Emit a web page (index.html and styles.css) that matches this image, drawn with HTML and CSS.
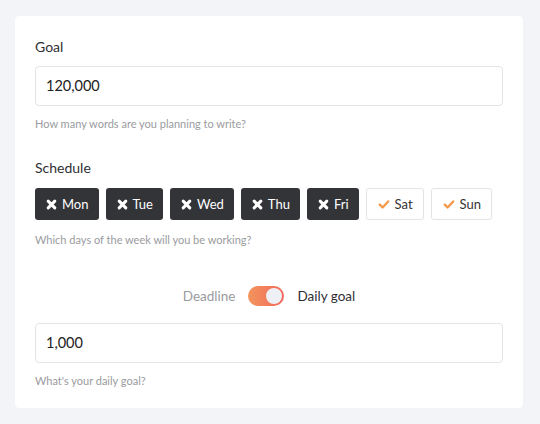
FILE: index.html
```html
<!DOCTYPE html>
<html lang="en">

<head>
    <meta charset="UTF-8">
    <title>Writing goal</title>
    <link rel="stylesheet" href="styles.css">
</head>

<body>
    <div class="card">
        <div class="field">
            <label class="label">Goal</label>
            <div class="input">120,000</div>
            <div class="hint">How many words are you planning to write?</div>
        </div>

        <div class="field sched">
            <label class="label">Schedule</label>
            <div class="days">
                <span class="day off"><svg class="ico" viewBox="0 0 10 10"><path d="M2 2L8 8M8 2L2 8"/></svg>Mon</span>
                <span class="day off"><svg class="ico" viewBox="0 0 10 10"><path d="M2 2L8 8M8 2L2 8"/></svg>Tue</span>
                <span class="day off"><svg class="ico" viewBox="0 0 10 10"><path d="M2 2L8 8M8 2L2 8"/></svg>Wed</span>
                <span class="day off"><svg class="ico" viewBox="0 0 10 10"><path d="M2 2L8 8M8 2L2 8"/></svg>Thu</span>
                <span class="day off"><svg class="ico" viewBox="0 0 10 10"><path d="M2 2L8 8M8 2L2 8"/></svg>Fri</span>
                <span class="day on"><svg class="ico" viewBox="0 0 12 10"><path d="M1.8 5.2L4.6 8L10.2 2"/></svg>Sat</span>
                <span class="day on"><svg class="ico" viewBox="0 0 12 10"><path d="M1.8 5.2L4.6 8L10.2 2"/></svg>Sun</span>
            </div>
            <div class="hint">Which days of the week will you be working?</div>
        </div>

        <div class="switch-row">
            <span class="opt">Deadline</span>
            <span class="toggle"><span class="knob"></span></span>
            <span class="opt active">Daily goal</span>
        </div>

        <div class="field last">
            <div class="input">1,000</div>
            <div class="hint">What's your daily goal?</div>
        </div>
    </div>
</body>

</html>
```

FILE: styles.css
```css
body {
    margin: 0;
    background: #f3f4f8;
    font-family: Lato, "Open Sans", sans-serif;
    color: #2f3034;
    padding: 16px 17px 16px 15px;
}

.card {
    background: #fff;
    border-radius: 4px;
    padding: 22px 20px 21px 20px;
    box-shadow: 0 0 1px rgba(0, 0, 0, 0.06);
}

.field {
    margin-bottom: 29px;
}

.field.sched {
    margin-bottom: 40px;
}

.field.last {
    margin-bottom: 0;
}

.label {
    display: block;
    font-size: 14px;
    margin-bottom: 11px;
}

.sched .label {
    margin-bottom: 12px;
}

.input {
    border: 1px solid #e3e4e8;
    border-radius: 4px;
    height: 38px;
    line-height: 38px;
    padding: 0 10px;
    font-size: 14.5px;
    color: #222;
}

.hint {
    font-size: 11px;
    color: #9a9ba0;
    margin-top: 11px;
}

.sched .hint {
    margin-top: 13px;
}

.days {
    display: flex;
    gap: 7px;
}

.day {
    display: flex;
    align-items: center;
    height: 32px;
    padding: 0 10px 0 11px;
    border-radius: 3px;
    font-size: 13px;
    box-sizing: border-box;
}

.day .ico {
    width: 11px;
    height: 11px;
    margin-right: 5px;
    fill: none;
    stroke: #fff;
    stroke-width: 2.8;
    stroke-linecap: round;
    stroke-linejoin: round;
}

.day.off {
    background: #333438;
    color: #fff;
}

.day.on {
    background: #fff;
    border: 1px solid #e3e4e8;
    color: #333;
}

.day.on .ico {
    width: 12px;
    stroke: #f29a4a;
    stroke-width: 2.4;
}

.switch-row {
    display: flex;
    justify-content: center;
    align-items: center;
    gap: 13px;
    margin-bottom: 17px;
}

.opt {
    font-size: 13.5px;
    color: #9a9ba0;
}

.opt.active {
    color: #2f3034;
}

.toggle {
    position: relative;
    width: 36px;
    height: 20px;
    border-radius: 10px;
    background: linear-gradient(90deg, #f2955c, #f2685c);
}

.knob {
    position: absolute;
    right: 2px;
    top: 2px;
    width: 16px;
    height: 16px;
    border-radius: 50%;
    background: #eff0f6;
}
```
